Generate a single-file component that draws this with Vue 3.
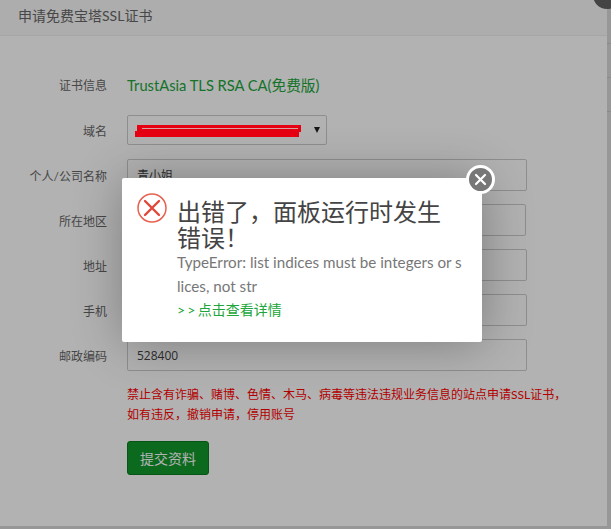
<script setup>
const rows = [
  { label: '个人/公司名称', value: '青小姐' },
  { label: '所在地区', value: '', narrow: true },
  { label: '地址', value: '' },
  { label: '手机', value: '' },
  { label: '邮政编码', value: '528400' },
]
</script>

<template>
  <div class="page">
    <div class="window">
      <header class="title">申请免费宝塔SSL证书</header>
      <div class="form">
        <div class="row info">
          <span class="label">证书信息</span>
          <span class="cert">TrustAsia TLS RSA CA(免费版)</span>
        </div>
        <div class="row domain">
          <span class="label">域名</span>
          <div class="select">
            <svg class="arrow" width="6" height="6" viewBox="0 0 6 6"><polygon points="0,0 6,0 3,6" fill="#222" /></svg>
          </div>
        </div>
        <div v-for="r in rows" :key="r.label" class="row field">
          <span class="label">{{ r.label }}</span>
          <div class="input" :class="{ narrow: r.narrow }">{{ r.value }}</div>
        </div>
        <p class="warn">禁止含有诈骗、赌博、色情、木马、病毒等违法违规业务信息的站点申请SSL证书，如有违反，撤销申请，停用账号</p>
        <button class="submit" type="button">提交资料</button>
      </div>
    </div>
    <div class="strip"></div>
    <div class="bottom"></div>

    <div class="shade"></div>
    <div class="outer-close"></div>

    <div class="redact">
      <span class="bar one"></span>
      <span class="bar two"></span>
      <span class="bar hair"></span>
    </div>

    <div class="dialog">
      <svg class="err" width="30" height="30" viewBox="0 0 30 30">
        <circle cx="15" cy="15" r="14" fill="none" stroke="#e8604f" stroke-width="1.5" />
        <path d="M8 8 22 22M22 8 8 22" fill="none" stroke="#e0483a" stroke-width="2.4" stroke-linecap="round" />
      </svg>
      <h3 class="msg">出错了，面板运行时发生错误！</h3>
      <p class="detail">TypeError: list indices must be integers or slices, not str</p>
      <a class="more"><span class="gt">&gt;&gt;</span>点击查看详情</a>
      <span class="close">
        <svg width="13" height="13" viewBox="0 0 13 13"><path d="M2 2 11 11M11 2 2 11" stroke="#fff" stroke-width="2.2" stroke-linecap="round" /></svg>
      </span>
    </div>
  </div>
</template>

<style>
html, body { margin: 0; padding: 0; }
</style>

<style scoped>
.page {
  position: relative;
  width: 611px;
  height: 529px;
  overflow: hidden;
  display: grid;
  grid-template-columns: 607px 4px;
  grid-template-rows: 526px 3px;
  background: #d8d8d8;
  font-family: "Lato", "Noto Sans CJK SC", sans-serif;
  color: #555;
}
.window {
  background: #fff;
  display: flex;
  flex-direction: column;
}
.title {
  height: 36px;
  line-height: 32px;
  box-sizing: border-box;
  padding-left: 18px;
  font-size: 14px;
  color: #666;
  background: #f8f8f8;
  border-bottom: 1px solid #eee;
}
.form {
  padding-top: 35px;
  display: flex;
  flex-direction: column;
}
.row {
  display: flex;
  align-items: center;
  gap: 20px;
}
.label {
  width: 107px;
  text-align: right;
  font-size: 12px;
  color: #666;
}
.field .label { padding-top: 1px; }
.info { height: 26px; margin-bottom: 18px; }
.cert { font-size: 14.7px; color: #20a53a; white-space: nowrap; }
.domain { margin-bottom: 14px; }
.select {
  width: 200px;
  height: 30px;
  box-sizing: border-box;
  border: 1px solid #ccc;
  border-radius: 2px;
  position: relative;
  display: flex;
  align-items: center;
  justify-content: flex-end;
  padding-right: 6px;
}
.field { margin-bottom: 13px; }
.input {
  width: 400px;
  height: 32px;
  box-sizing: border-box;
  border: 1px solid #ccc;
  border-radius: 2px;
  padding: 0 9px;
  line-height: 32px;
  font-family: "Open Sans", "Noto Sans CJK SC", sans-serif;
  font-size: 12px;
  color: #444;
}
.input.narrow { width: 399px; }
.warn {
  margin: 1px 0 0 127px;
  width: 440px;
  font-size: 12px;
  line-height: 20px;
  color: #f00;
}
.submit {
  margin: 16px 0 0 127px;
  width: 82px;
  height: 34px;
  padding: 0;
  border: 1px solid #0b7a22;
  border-radius: 3px;
  background: #10982b;
  color: #fff;
  font: 14px "Open Sans", "Noto Sans CJK SC", sans-serif;
}
.strip {
  background:
    linear-gradient(#c4c4c4, #c4c4c4) 0 43px / 100% 1px no-repeat,
    linear-gradient(#c4c4c4, #c4c4c4) 0 77px / 100% 1px no-repeat,
    linear-gradient(#c4c4c4, #c4c4c4) 0 111px / 100% 1px no-repeat,
    #d8d8d8;
}
.bottom { grid-column: 1 / -1; background: #d8d8d8; }
.shade {
  position: absolute;
  inset: 0;
  background: rgba(0, 0, 0, 0.3);
}
.outer-close {
  position: absolute;
  left: 593px;
  top: -19px;
  width: 28px;
  height: 28px;
  border-radius: 50%;
  background: #444;
}
.redact { position: absolute; inset: 0; pointer-events: none; }
.bar { position: absolute; background: #e60012; }
.bar.one { left: 137px; top: 125px; width: 164px; height: 7px; }
.bar.two { left: 135px; top: 131px; width: 164px; height: 6px; }
.bar.hair { left: 142px; top: 128px; width: 156px; height: 1px; background: #d9a0a0; }
.dialog {
  position: absolute;
  left: 122px;
  top: 178px;
  width: 360px;
  height: 164px;
  box-sizing: border-box;
  padding: 21px 19px 0 55px;
  background: #fff;
  border-radius: 2px;
  box-shadow: 1px 1px 50px rgba(0, 0, 0, 0.3);
}
.err { position: absolute; left: 15px; top: 15px; }
.msg {
  margin: 0;
  font-size: 24px;
  font-weight: 400;
  line-height: 26px;
  color: #444;
}
.detail {
  margin: -1px 0 0;
  font-size: 15.2px;
  line-height: 24px;
  color: #777;
  word-break: break-all;
}
.more {
  display: block;
  font-size: 14px;
  line-height: 24px;
  color: #20a53a;
}
.gt { letter-spacing: 2.2px; }
.close {
  position: absolute;
  left: 344px;
  top: -13px;
  width: 29px;
  height: 29px;
  box-sizing: border-box;
  border: 3px solid #fff;
  border-radius: 50%;
  background: #777;
  display: flex;
  align-items: center;
  justify-content: center;
}
</style>
